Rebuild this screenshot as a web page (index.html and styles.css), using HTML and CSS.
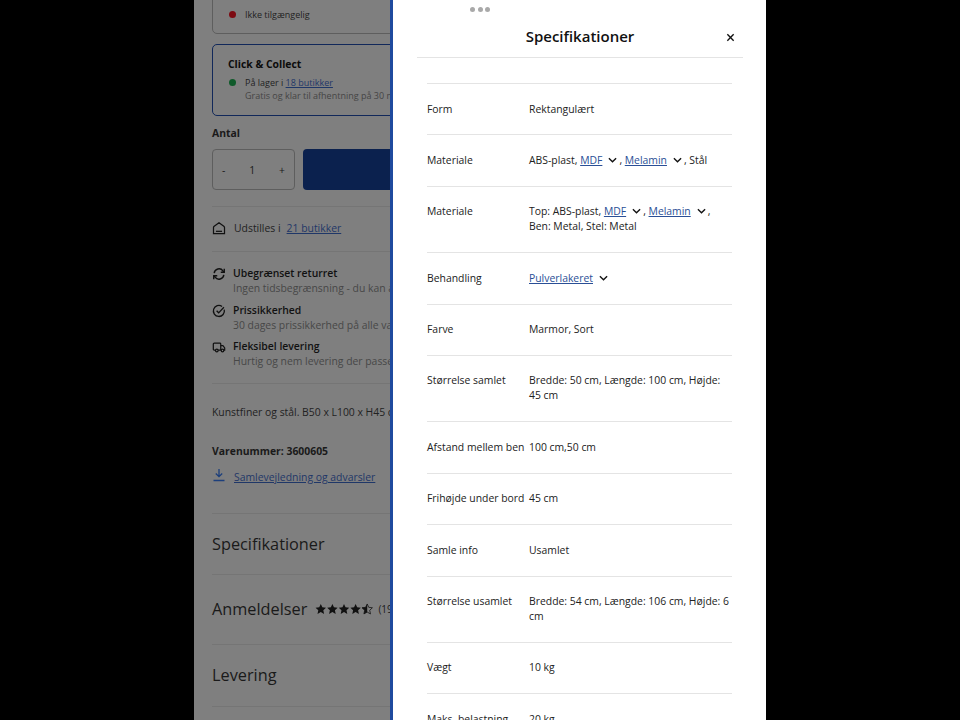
FILE: index.html
```html
<!DOCTYPE html>
<html lang="da">
<head>
    <meta charset="UTF-8">
    <title>Specifikationer</title>
    <link rel="stylesheet" href="styles.css">
</head>
<body>
<div class="screen">
    <div class="product">
        <div class="product-inner">
            <div class="card card-top">
                <div class="stock"><span class="dot dot-red"></span><span>Ikke tilgængelig</span></div>
            </div>
            <div class="card card-active">
                <div class="card-title">Click &amp; Collect</div>
                <div class="stock"><span class="dot dot-green"></span><span>På lager i <a href="#">18 butikker</a></span></div>
                <div class="stock-note">Gratis og klar til afhentning på 30 minutter</div>
            </div>
            <div class="qty-label">Antal</div>
            <div class="buy-row">
                <div class="qty"><span>-</span><span>1</span><span>+</span></div>
                <div class="buy-button"></div>
            </div>
            <div class="showroom">
                <svg class="icon" viewBox="0 0 16 16" fill="none" stroke="#111" stroke-width="1.400"><path d="M1.700 14.300V7.500c0-.6.3-1.100.8-1.500L8 2l5.500 4c.5.4.8.9.8 1.500v6.800z"/><path d="M4.500 11.800h7"/></svg>
                <span>Udstilles i</span>
                <a href="#">21 butikker</a>
            </div>
            <div class="perks">
                <div class="perk">
                    <svg class="icon" viewBox="0 0 16 16" fill="none" stroke="#111" stroke-width="1.600"><path d="M2.500 7A5.500 5.500 0 0 1 12.500 4.500L14 6"/><path d="M14 2v4h-4"/><path d="M13.500 9A5.500 5.500 0 0 1 3.500 11.500L2 10"/><path d="M2 14v-4h4"/></svg>
                    <div><div class="perk-title">Ubegrænset returret</div><div class="perk-text">Ingen tidsbegrænsning - du kan altid returnere</div></div>
                </div>
                <div class="perk">
                    <svg class="icon" viewBox="0 0 16 16" fill="none" stroke="#111" stroke-width="1.500"><path d="M14 6.500A6.300 6.300 0 1 1 11.500 2.800"/><path d="M5.300 7.800l2.300 2.300 6-6.300"/></svg>
                    <div><div class="perk-title">Prissikkerhed</div><div class="perk-text">30 dages prissikkerhed på alle varer</div></div>
                </div>
                <div class="perk">
                    <svg class="icon" viewBox="0 0 16 16" fill="none" stroke="#111" stroke-width="1.400"><path d="M4 11.500H2.500a1 1 0 0 1-1-1V4.500a1 1 0 0 1 1-1h6.500a1 1 0 0 1 1 1v7H7"/><path d="M10 6.500h2.500l2 2.500v2.500h-1"/><circle cx="5.500" cy="12" r="1.500"/><circle cx="12" cy="12" r="1.500"/></svg>
                    <div><div class="perk-title">Fleksibel levering</div><div class="perk-text">Hurtig og nem levering der passer dig</div></div>
                </div>
            </div>
            <p class="summary">Kunstfiner og stål. B50 x L100 x H45 cm.</p>
            <div class="sku">Varenummer: 3600605</div>
            <div class="manual">
                <svg class="icon-small" viewBox="0 0 14 14" fill="none" stroke="#1c3f7c" stroke-width="1.300"><path d="M7 1v7.500M3.800 5.500L7 8.700l3.200-3.200M1.500 12.500h11"/></svg>
                <a href="#">Samlevejledning og advarsler</a>
            </div>
            <div class="accordion">Specifikationer</div>
            <div class="accordion accordion-reviews">
                <span>Anmeldelser</span>
                <svg class="stars" viewBox="0 0 60 12">
                    <defs>
                        <path id="star" d="M6 .800l1.600 3.500 3.800.400-2.800 2.600.800 3.800L6 9.200l-3.400 1.900.800-3.800L.600 4.700l3.800-.400z"/>
                    </defs>
                    <use href="#star"/>
                    <use href="#star" x="12"/>
                    <use href="#star" x="24"/>
                    <use href="#star" x="36"/>
                    <use href="#star" x="48" fill="none" stroke="#111" stroke-width="0.800"/>
                    <path d="M54 .800v8.400l-3.400 1.900.800-3.800-2.800-2.600 3.800-.400z"/>
                </svg>
                <span class="count">(19)</span>
            </div>
            <div class="accordion accordion-last">Levering</div>
        </div>
    </div>

    <div class="drawer">
        <div class="drawer-grip"><span></span><span></span><span></span></div>
        <div class="drawer-head">
            <h2>Specifikationer</h2>
            <svg class="close" viewBox="0 0 10 10" fill="none" stroke="#111" stroke-width="1.500"><path d="M1.500 1.500l7 7M8.500 1.500l-7 7"/></svg>
        </div>
        <div class="spec-list">
            <div class="spec"><div class="spec-name">Form</div><div class="spec-value">Rektangulært</div></div>
            <div class="spec"><div class="spec-name">Materiale</div><div class="spec-value">ABS-plast, <a href="#">MDF</a><svg class="chev" viewBox="0 0 10 6"><path d="M1 1l4 4 4-4"/></svg>, <a href="#">Melamin</a><svg class="chev" viewBox="0 0 10 6"><path d="M1 1l4 4 4-4"/></svg>, Stål</div></div>
            <div class="spec"><div class="spec-name">Materiale</div><div class="spec-value">Top: ABS-plast, <a href="#">MDF</a><svg class="chev" viewBox="0 0 10 6"><path d="M1 1l4 4 4-4"/></svg>, <a href="#">Melamin</a><svg class="chev" viewBox="0 0 10 6"><path d="M1 1l4 4 4-4"/></svg>, Ben: Metal, Stel: Metal</div></div>
            <div class="spec"><div class="spec-name">Behandling</div><div class="spec-value"><a href="#">Pulverlakeret</a><svg class="chev" viewBox="0 0 10 6"><path d="M1 1l4 4 4-4"/></svg></div></div>
            <div class="spec"><div class="spec-name">Farve</div><div class="spec-value">Marmor, Sort</div></div>
            <div class="spec"><div class="spec-name">Størrelse samlet</div><div class="spec-value">Bredde: 50 cm, Længde: 100 cm, Højde: 45 cm</div></div>
            <div class="spec"><div class="spec-name">Afstand mellem ben</div><div class="spec-value">100 cm,50 cm</div></div>
            <div class="spec"><div class="spec-name">Frihøjde under bord</div><div class="spec-value">45 cm</div></div>
            <div class="spec"><div class="spec-name">Samle info</div><div class="spec-value">Usamlet</div></div>
            <div class="spec"><div class="spec-name">Størrelse usamlet</div><div class="spec-value">Bredde: 54 cm, Længde: 106 cm, Højde: 6 cm</div></div>
            <div class="spec"><div class="spec-name">Vægt</div><div class="spec-value">10 kg</div></div>
            <div class="spec"><div class="spec-name">Maks. belastning</div><div class="spec-value">20 kg</div></div>
        </div>
    </div>
</div>
</body>
</html>
```

FILE: styles.css
```css
html, body {
    margin: 0;
    height: 100%;
    background-color: #000;
}
body {
    font-family: "Open Sans", sans-serif;
    font-size: 10.4px;
    color: #111;
    overflow: hidden;
}
a {
    color: #1c3f7c;
}
.screen {
    display: flex;
    width: 572px;
    height: 720px;
    margin-left: 194px;
    overflow: hidden;
}

/* page behind the drawer */
.product {
    width: 196px;
    flex: none;
    overflow: hidden;
    background-color: #7f7f7f;
    border-right: 3px solid #1f4a9e;
    color: #1a1a1a;
}
.product a {
    color: #1f3768;
}
.product-inner {
    width: 560px;
    padding-left: 18px;
    margin-top: -10px;
}
.card {
    border: 1px solid #5e5e5e;
    border-radius: 5px;
    padding: 0 15px;
    box-sizing: border-box;
}
.card-top {
    height: 44px;
    padding-top: 17px;
}
.card-active {
    height: 72px;
    margin-top: 10px;
    padding-top: 10px;
    border: 1.5px solid #11285a;
}
.card-title {
    font-weight: 700;
    font-size: 10.4px;
    line-height: 18px;
    color: #0c0c0c;
}
.stock {
    display: flex;
    align-items: center;
    gap: 9px;
    font-size: 9px;
    line-height: 13px;
    margin-top: 3px;
    color: #222;
}
.card-top .stock {
    margin-top: 0;
}
.dot {
    width: 7px;
    height: 7px;
    border-radius: 50%;
    margin-left: 1px;
}
.dot-red { background-color: #7d0a12; }
.dot-green { background-color: #0f5a2a; }
.stock-note {
    font-size: 9px;
    line-height: 13px;
    padding-left: 17px;
    color: #454545;
}
.qty-label {
    font-weight: 700;
    line-height: 16px;
    margin-top: 9px;
}
.buy-row {
    display: flex;
    gap: 8px;
    margin-top: 8px;
    padding-bottom: 16px;
    border-bottom: 1px solid #757575;
}
.qty {
    width: 83px;
    height: 41px;
    box-sizing: border-box;
    border: 1px solid #5e5e5e;
    border-radius: 4px;
    display: flex;
    align-items: center;
    justify-content: space-between;
    padding: 0 9px;
}
.buy-button {
    width: 300px;
    height: 41px;
    background-color: #0b214e;
    border-radius: 4px;
}
.showroom {
    display: flex;
    align-items: center;
    gap: 6px;
    height: 42px;
    padding-bottom: 2px;
    border-bottom: 1px solid #757575;
    color: #222;
}
.showroom .icon {
    margin-right: 2px;
}
.icon {
    width: 14px;
    height: 14px;
    flex: none;
}
.perks {
    padding: 14px 0 7px;
    border-bottom: 1px solid #757575;
}
.perk {
    display: flex;
    gap: 7px;
    height: 36.500px;
}
.perk .icon {
    margin-top: 1px;
}
.perk-title {
    font-weight: 600;
    line-height: 15px;
    color: #111;
}
.perk-text {
    line-height: 15px;
    color: #474747;
}
.summary {
    margin: 20px 0 0;
    line-height: 16px;
    color: #222;
}
.sku {
    font-weight: 700;
    line-height: 16px;
    margin-top: 23px;
}
.manual {
    display: flex;
    gap: 8px;
    margin-top: 9px;
    padding-bottom: 27px;
    line-height: 18px;
}
.icon-small {
    width: 14px;
    height: 14px;
}
.accordion {
    height: 60px;
    border-top: 1px solid #757575;
    display: flex;
    align-items: center;
    font-size: 16.3px;
    color: #1a1a1a;
}
.accordion-reviews {
    height: 69px;
    gap: 8px;
}
.accordion-last {
    height: 61px;
    border-bottom: 1px solid #757575;
}
.stars {
    width: 58px;
    height: 12px;
    fill: #111;
}
.count {
    font-size: 10px;
    margin-left: -3px;
}

/* drawer */
.drawer {
    flex: 1;
    background-color: #fff;
    overflow: hidden;
}
.drawer-grip {
    display: flex;
    gap: 2.500px;
    padding: 7px 0 0 77px;
    height: 13px;
}
.drawer-grip span {
    width: 5px;
    height: 5px;
    border-radius: 50%;
    background-color: #a9a9a9;
}
.drawer-head {
    display: flex;
    align-items: center;
    justify-content: center;
    position: relative;
    height: 37px;
    margin: 0 23px 0 24px;
    border-bottom: 1px solid #e4e4e4;
}
.drawer-head h2 {
    margin: 0 0 5px;
    font-size: 15px;
    font-weight: 600;
    color: #111;
}
.close {
    position: absolute;
    right: 8px;
    top: 13px;
    width: 9px;
    height: 9px;
}
.spec-list {
    margin: 25px 34px 0;
    border-top: 1px solid #e4e4e4;
}
.spec {
    display: flex;
    padding: 17.500px 0 17.900px;
    border-bottom: 1px solid #e4e4e4;
    line-height: 15px;
    color: #222;
}
.spec-name {
    width: 102px;
    flex: none;
    white-space: nowrap;
}
.spec-value a {
    color: #2a4f96;
}
.chev {
    width: 9px;
    height: 6px;
    margin: 0 2px 1px 6px;
    fill: none;
    stroke: #111;
    stroke-width: 1.500;
}
```
